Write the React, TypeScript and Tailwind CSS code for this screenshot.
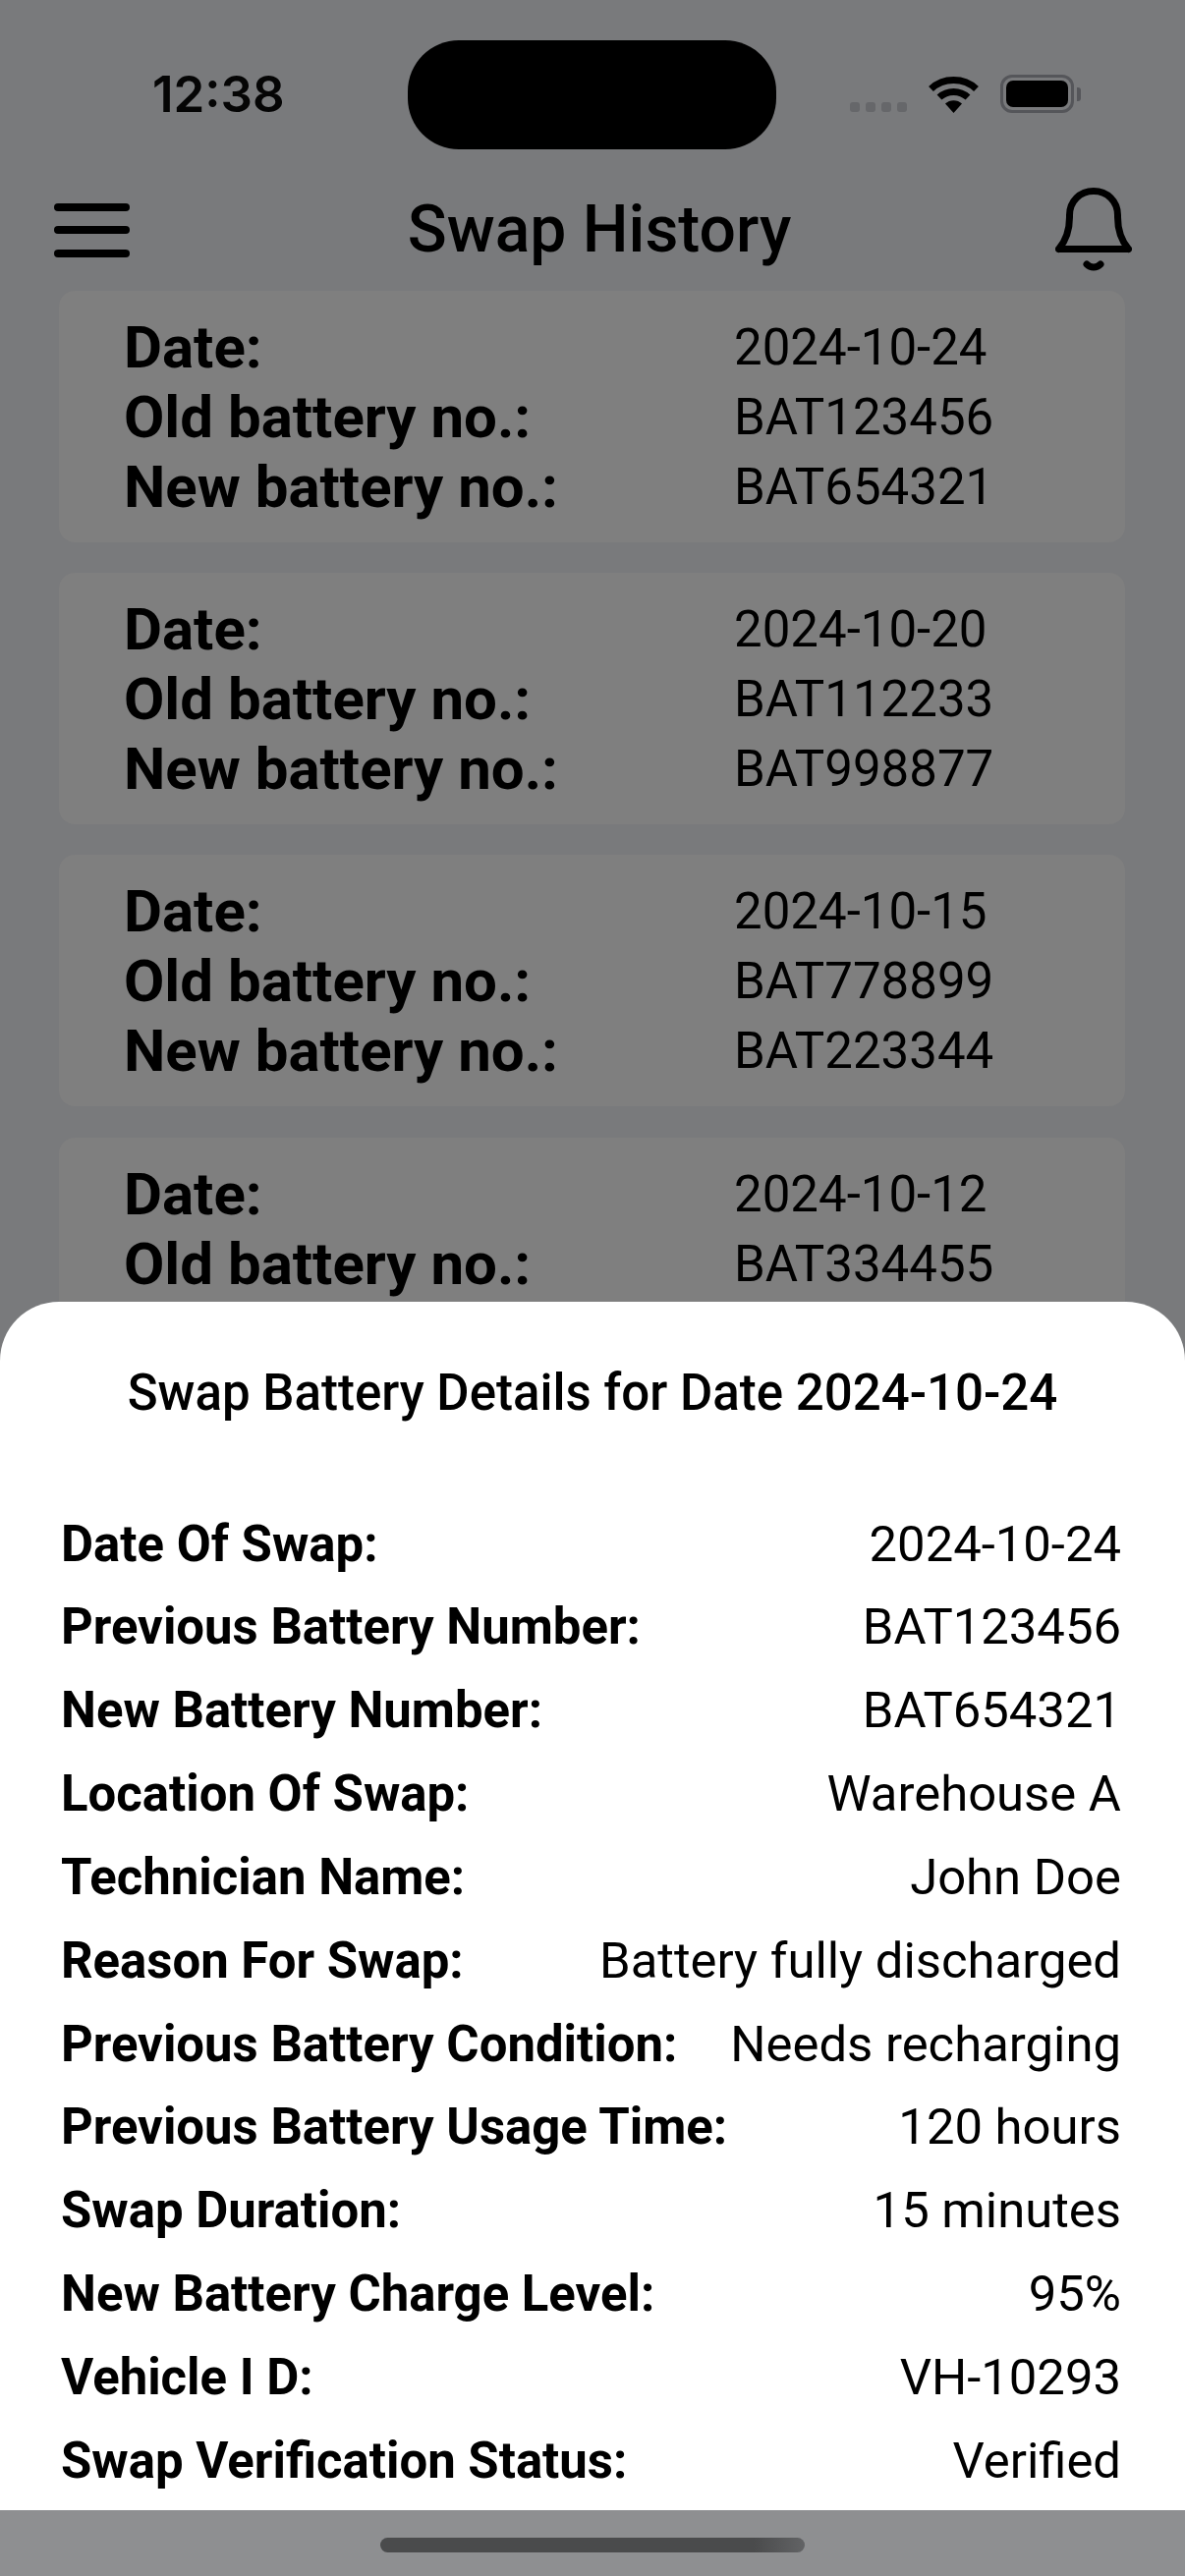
const swaps = [
  { rows: [["Date:", "2024-10-24"], ["Old battery no.:", "BAT123456"], ["New battery no.:", "BAT654321"]] },
  { rows: [["Date:", "2024-10-20"], ["Old battery no.:", "BAT112233"], ["New battery no.:", "BAT998877"]] },
  { rows: [["Date:", "2024-10-15"], ["Old battery no.:", "BAT778899"], ["New battery no.:", "BAT223344"]] },
  { rows: [["Date:", "2024-10-12"], ["Old battery no.:", "BAT334455"]] },
];

const details = [
  ["Date Of Swap:", "2024-10-24"],
  ["Previous Battery Number:", "BAT123456"],
  ["New Battery Number:", "BAT654321"],
  ["Location Of Swap:", "Warehouse A"],
  ["Technician Name:", "John Doe"],
  ["Reason For Swap:", "Battery fully discharged"],
  ["Previous Battery Condition:", "Needs recharging"],
  ["Previous Battery Usage Time:", "120 hours"],
  ["Swap Duration:", "15 minutes"],
  ["New Battery Charge Level:", "95%"],
  ["Vehicle I D:", "VH-10293"],
  ["Swap Verification Status:", "Verified"],
];

const Wifi = () => (
  <svg width="51" height="38" viewBox="0 0 51 38" fill="none">
    <path d="M2.5 13.5C15 1.5 36 1.5 48.500 13.5" stroke="#000" strokeWidth="7" />
    <path d="M11 22C19 14.500 32 14.500 40 22" stroke="#000" strokeWidth="7" />
    <path d="M17 28.500C21.500 24 29.500 24 34 28.500L25.500 38Z" fill="#000" />
  </svg>
);

const Bell = () => (
  <svg width="78" height="86" viewBox="0 0 78 86" fill="none">
    <path
      d="M3.500 62.500H74.500M3.500 62.500C9 56 14.500 46 14.500 30V28C14.500 14 25 3.500 39 3.500C53 3.500 63.500 14 63.500 28V30C63.500 46 69 56 74.500 62.500"
      stroke="#000"
      strokeWidth="7"
      strokeLinecap="round"
      strokeLinejoin="round"
    />
    <path d="M32 78C36 82 42 82 46 78" stroke="#000" strokeWidth="7" strokeLinecap="round" />
  </svg>
);

const App = () => {
  return (
    <div className="relative h-[2622px] w-[1206px] overflow-hidden bg-[#797a7c] font-['Roboto',sans-serif] text-black">
      <div className="flex h-[152px] items-start pt-[41px]">
        <div className="flex h-[111px] w-[415px] items-center pl-[155px] font-['Inter',sans-serif] text-[51px] font-semibold text-[#050505]">
          12:38
        </div>
        <div className="h-[111px] w-[375px] rounded-[52px] bg-black" />
        <div className="relative h-[111px] flex-1">
          <div className="absolute left-[75px] top-[63px] flex gap-[6px]">
            {[0, 1, 2, 3].map((i) => (
              <div key={i} className="h-[10px] w-[10px] rounded-[3px] bg-[#66676a]" />
            ))}
          </div>
          <div className="absolute left-[155px] top-[36px]">
            <Wifi />
          </div>
          <div className="absolute left-[228px] top-[35px] h-[39px] w-[75px] rounded-[12px] border-[3px] border-[#55565a] p-[3px]">
            <div className="h-full w-full rounded-[7px] bg-black" />
          </div>
          <div className="absolute left-[306px] top-[48px] h-[14px] w-[4px] rounded-r-[3px] bg-[#55565a]" />
        </div>
      </div>

      <header className="flex h-[144px] items-center justify-between pl-[55px] pr-[54px] pt-[20px]">
        <div className="flex w-[77px] flex-col gap-[15.5px]">
          <div className="h-[8px] rounded-full bg-black" />
          <div className="h-[8px] rounded-full bg-black" />
          <div className="h-[8px] rounded-full bg-black" />
        </div>
        <h1 className="ml-[14px] text-[66px] font-medium leading-[76px]">Swap History</h1>
        <Bell />
      </header>

      <div className="flex flex-col gap-[31.2px] pl-[60px] pr-[61px]">
        {swaps.map((swap, index) => (
          <div key={index} className="h-[256px] rounded-[16px] bg-[#7f7f7f] pl-[66px] pt-[22px]">
            {swap.rows.map(([label, value]) => (
              <div key={label} className="flex leading-[71px]">
                <span className="w-[621px] text-[60px] font-bold">{label}</span>
                <span className="text-[51px]">{value}</span>
              </div>
            ))}
          </div>
        ))}
      </div>

      <div className="absolute bottom-[67px] left-0 right-0 h-[1230px] rounded-t-[60px] bg-white pl-[62px] pr-[65px] pt-[63px]">
        <h2 className="mb-[81.5px] ml-[3px] text-center text-[51px] font-medium leading-[60px]">
          Swap Battery Details for Date 2024-10-24
        </h2>
        {details.map(([label, value]) => (
          <div key={label} className="flex justify-between text-[50.8px] leading-[84.85px]">
            <span className="text-[50.9px] font-bold">{label}</span>
            <span>{value}</span>
          </div>
        ))}
      </div>

      <div className="absolute bottom-0 left-0 right-0 h-[67px] bg-[#8e8f91] pl-[387px] pt-[28px]">
        <div className="h-[15px] w-[432px] rounded-full bg-[linear-gradient(90deg,#4a4b4c_0%,#4a4b4c_88%,#626365_100%)]" />
      </div>
    </div>
  );
};

export default App;
